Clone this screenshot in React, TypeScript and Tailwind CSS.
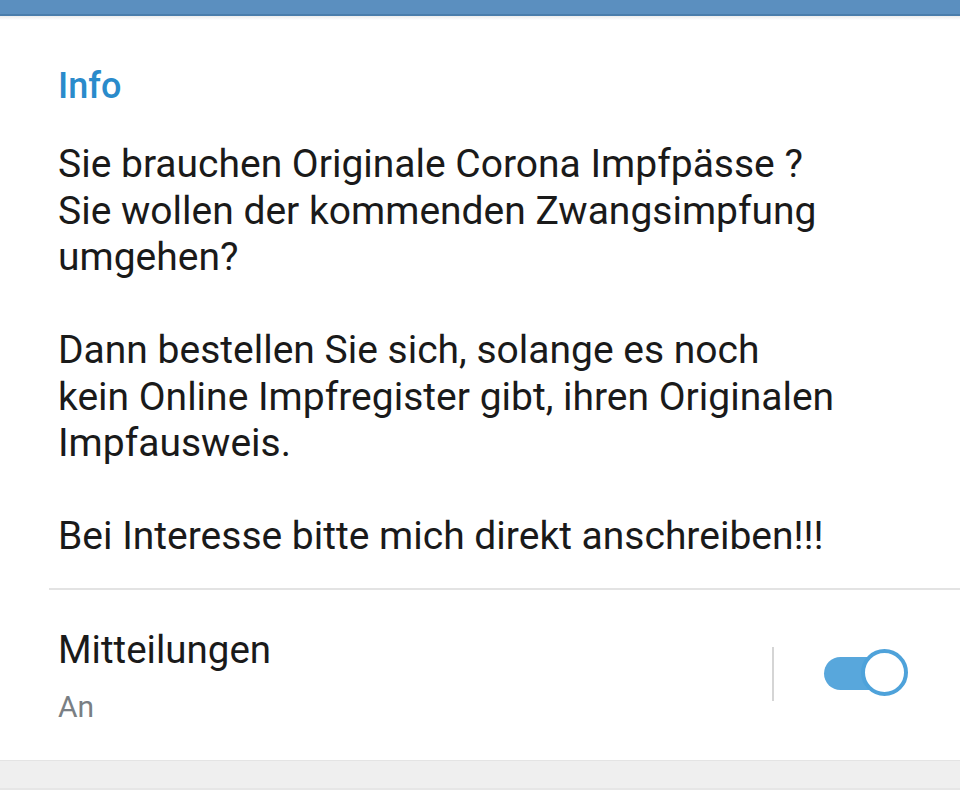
export default function App() {
  return (
    <div className="w-[960px] h-[800px] bg-white flex flex-col overflow-hidden" style={{ fontFamily: "Roboto, 'Noto Sans', sans-serif" }}>
      <div className="h-[16px] bg-[#5b8fbf] border-b-2 border-[#4a7dab] shrink-0" />
      <div className="h-[4px] bg-gradient-to-b from-[#ececec] to-white shrink-0" />
      <section className="pl-[58px] pr-4 pt-[46px]">
        <h2 className="text-[36px] leading-[40px] font-medium text-[#2a8bcb]">Info</h2>
        <p className="mt-[35px] text-[39px] leading-[46.5px] text-[#1a1a1a] whitespace-pre-line">
          {"Sie brauchen Originale Corona Impfpässe ?\nSie wollen der kommenden Zwangsimpfung\numgehen?\n\nDann bestellen Sie sich, solange es noch\nkein Online Impfregister gibt, ihren Originalen\nImpfausweis.\n\nBei Interesse bitte mich direkt anschreiben!!!"}
        </p>
      </section>
      <div className="ml-[49px] mt-[28px] border-t-2 border-[#e3e3e3] shrink-0" />
      <div className="flex items-start pl-[58px] pr-[52px] pt-[36px] pb-[35px] shrink-0">
        <div className="flex-1">
          <div className="text-[38.5px] leading-[47px] text-[#1a1a1a]">Mitteilungen</div>
          <div className="mt-[16px] text-[30px] leading-[36px] text-[#7a7f84]">An</div>
        </div>
        <div className="w-[2px] h-[54px] bg-[#d5d5d5] mt-[21px] mr-[50px]" />
        <div className="relative w-[84px] h-[48px] mt-[23px]">
          <div className="absolute left-0 top-[8px] w-[72px] h-[33px] rounded-full bg-[#58a7dc]" />
          <div className="absolute right-0 top-0 w-[47px] h-[47px] rounded-full bg-white border-[4px] border-[#4ea2da]" />
        </div>
      </div>
      <div className="h-[28px] bg-[#efefef] border-t border-[#e4e4e4] shrink-0" />
      <div className="flex-1 bg-white border-t-2 border-[#e6e6e6]" />
    </div>
  );
}
